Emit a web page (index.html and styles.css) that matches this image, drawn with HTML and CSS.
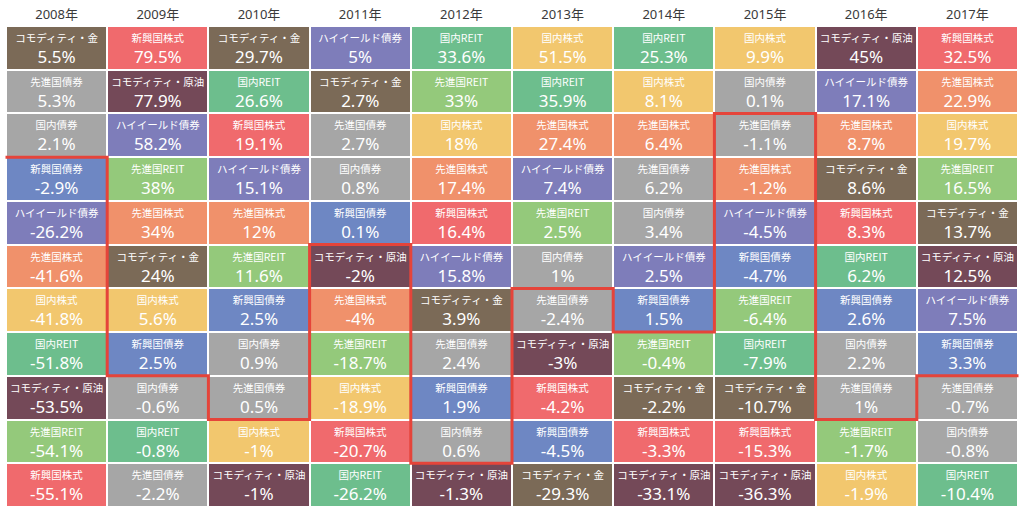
FILE: index.html
```html
<!DOCTYPE html>
<html lang="ja">
<head>
<meta charset="utf-8">
<title>資産クラス別リターン</title>
<link rel="stylesheet" href="styles.css">
</head>
<body>
<div class="page">
  <div class="table">
    <div class="col">
      <div class="year">2008年</div>
      <div class="cell gold"><span class="label">コモディティ・金</span><span class="value">5.5%</span></div>
      <div class="cell devbond"><span class="label">先進国債券</span><span class="value">5.3%</span></div>
      <div class="cell jbond"><span class="label">国内債券</span><span class="value">2.1%</span></div>
      <div class="cell embond"><span class="label">新興国債券</span><span class="value">-2.9%</span></div>
      <div class="cell hy"><span class="label">ハイイールド債券</span><span class="value">-26.2%</span></div>
      <div class="cell deveq"><span class="label">先進国株式</span><span class="value">-41.6%</span></div>
      <div class="cell jeq"><span class="label">国内株式</span><span class="value">-41.8%</span></div>
      <div class="cell jreit"><span class="label">国内REIT</span><span class="value">-51.8%</span></div>
      <div class="cell oil"><span class="label">コモディティ・原油</span><span class="value">-53.5%</span></div>
      <div class="cell devreit"><span class="label">先進国REIT</span><span class="value">-54.1%</span></div>
      <div class="cell emeq"><span class="label">新興国株式</span><span class="value">-55.1%</span></div>
    </div>
    <div class="col">
      <div class="year">2009年</div>
      <div class="cell emeq"><span class="label">新興国株式</span><span class="value">79.5%</span></div>
      <div class="cell oil"><span class="label">コモディティ・原油</span><span class="value">77.9%</span></div>
      <div class="cell hy"><span class="label">ハイイールド債券</span><span class="value">58.2%</span></div>
      <div class="cell devreit"><span class="label">先進国REIT</span><span class="value">38%</span></div>
      <div class="cell deveq"><span class="label">先進国株式</span><span class="value">34%</span></div>
      <div class="cell gold"><span class="label">コモディティ・金</span><span class="value">24%</span></div>
      <div class="cell jeq"><span class="label">国内株式</span><span class="value">5.6%</span></div>
      <div class="cell embond"><span class="label">新興国債券</span><span class="value">2.5%</span></div>
      <div class="cell jbond"><span class="label">国内債券</span><span class="value">-0.6%</span></div>
      <div class="cell jreit"><span class="label">国内REIT</span><span class="value">-0.8%</span></div>
      <div class="cell devbond"><span class="label">先進国債券</span><span class="value">-2.2%</span></div>
    </div>
    <div class="col">
      <div class="year">2010年</div>
      <div class="cell gold"><span class="label">コモディティ・金</span><span class="value">29.7%</span></div>
      <div class="cell jreit"><span class="label">国内REIT</span><span class="value">26.6%</span></div>
      <div class="cell emeq"><span class="label">新興国株式</span><span class="value">19.1%</span></div>
      <div class="cell hy"><span class="label">ハイイールド債券</span><span class="value">15.1%</span></div>
      <div class="cell deveq"><span class="label">先進国株式</span><span class="value">12%</span></div>
      <div class="cell devreit"><span class="label">先進国REIT</span><span class="value">11.6%</span></div>
      <div class="cell embond"><span class="label">新興国債券</span><span class="value">2.5%</span></div>
      <div class="cell jbond"><span class="label">国内債券</span><span class="value">0.9%</span></div>
      <div class="cell devbond"><span class="label">先進国債券</span><span class="value">0.5%</span></div>
      <div class="cell jeq"><span class="label">国内株式</span><span class="value">-1%</span></div>
      <div class="cell oil"><span class="label">コモディティ・原油</span><span class="value">-1%</span></div>
    </div>
    <div class="col">
      <div class="year">2011年</div>
      <div class="cell hy"><span class="label">ハイイールド債券</span><span class="value">5%</span></div>
      <div class="cell gold"><span class="label">コモディティ・金</span><span class="value">2.7%</span></div>
      <div class="cell devbond"><span class="label">先進国債券</span><span class="value">2.7%</span></div>
      <div class="cell jbond"><span class="label">国内債券</span><span class="value">0.8%</span></div>
      <div class="cell embond"><span class="label">新興国債券</span><span class="value">0.1%</span></div>
      <div class="cell oil"><span class="label">コモディティ・原油</span><span class="value">-2%</span></div>
      <div class="cell deveq"><span class="label">先進国株式</span><span class="value">-4%</span></div>
      <div class="cell devreit"><span class="label">先進国REIT</span><span class="value">-18.7%</span></div>
      <div class="cell jeq"><span class="label">国内株式</span><span class="value">-18.9%</span></div>
      <div class="cell emeq"><span class="label">新興国株式</span><span class="value">-20.7%</span></div>
      <div class="cell jreit"><span class="label">国内REIT</span><span class="value">-26.2%</span></div>
    </div>
    <div class="col">
      <div class="year">2012年</div>
      <div class="cell jreit"><span class="label">国内REIT</span><span class="value">33.6%</span></div>
      <div class="cell devreit"><span class="label">先進国REIT</span><span class="value">33%</span></div>
      <div class="cell jeq"><span class="label">国内株式</span><span class="value">18%</span></div>
      <div class="cell deveq"><span class="label">先進国株式</span><span class="value">17.4%</span></div>
      <div class="cell emeq"><span class="label">新興国株式</span><span class="value">16.4%</span></div>
      <div class="cell hy"><span class="label">ハイイールド債券</span><span class="value">15.8%</span></div>
      <div class="cell gold"><span class="label">コモディティ・金</span><span class="value">3.9%</span></div>
      <div class="cell devbond"><span class="label">先進国債券</span><span class="value">2.4%</span></div>
      <div class="cell embond"><span class="label">新興国債券</span><span class="value">1.9%</span></div>
      <div class="cell jbond"><span class="label">国内債券</span><span class="value">0.6%</span></div>
      <div class="cell oil"><span class="label">コモディティ・原油</span><span class="value">-1.3%</span></div>
    </div>
    <div class="col">
      <div class="year">2013年</div>
      <div class="cell jeq"><span class="label">国内株式</span><span class="value">51.5%</span></div>
      <div class="cell jreit"><span class="label">国内REIT</span><span class="value">35.9%</span></div>
      <div class="cell deveq"><span class="label">先進国株式</span><span class="value">27.4%</span></div>
      <div class="cell hy"><span class="label">ハイイールド債券</span><span class="value">7.4%</span></div>
      <div class="cell devreit"><span class="label">先進国REIT</span><span class="value">2.5%</span></div>
      <div class="cell jbond"><span class="label">国内債券</span><span class="value">1%</span></div>
      <div class="cell devbond"><span class="label">先進国債券</span><span class="value">-2.4%</span></div>
      <div class="cell oil"><span class="label">コモディティ・原油</span><span class="value">-3%</span></div>
      <div class="cell emeq"><span class="label">新興国株式</span><span class="value">-4.2%</span></div>
      <div class="cell embond"><span class="label">新興国債券</span><span class="value">-4.5%</span></div>
      <div class="cell gold"><span class="label">コモディティ・金</span><span class="value">-29.3%</span></div>
    </div>
    <div class="col">
      <div class="year">2014年</div>
      <div class="cell jreit"><span class="label">国内REIT</span><span class="value">25.3%</span></div>
      <div class="cell jeq"><span class="label">国内株式</span><span class="value">8.1%</span></div>
      <div class="cell deveq"><span class="label">先進国株式</span><span class="value">6.4%</span></div>
      <div class="cell devbond"><span class="label">先進国債券</span><span class="value">6.2%</span></div>
      <div class="cell jbond"><span class="label">国内債券</span><span class="value">3.4%</span></div>
      <div class="cell hy"><span class="label">ハイイールド債券</span><span class="value">2.5%</span></div>
      <div class="cell embond"><span class="label">新興国債券</span><span class="value">1.5%</span></div>
      <div class="cell devreit"><span class="label">先進国REIT</span><span class="value">-0.4%</span></div>
      <div class="cell gold"><span class="label">コモディティ・金</span><span class="value">-2.2%</span></div>
      <div class="cell emeq"><span class="label">新興国株式</span><span class="value">-3.3%</span></div>
      <div class="cell oil"><span class="label">コモディティ・原油</span><span class="value">-33.1%</span></div>
    </div>
    <div class="col">
      <div class="year">2015年</div>
      <div class="cell jeq"><span class="label">国内株式</span><span class="value">9.9%</span></div>
      <div class="cell jbond"><span class="label">国内債券</span><span class="value">0.1%</span></div>
      <div class="cell devbond"><span class="label">先進国債券</span><span class="value">-1.1%</span></div>
      <div class="cell deveq"><span class="label">先進国株式</span><span class="value">-1.2%</span></div>
      <div class="cell hy"><span class="label">ハイイールド債券</span><span class="value">-4.5%</span></div>
      <div class="cell embond"><span class="label">新興国債券</span><span class="value">-4.7%</span></div>
      <div class="cell devreit"><span class="label">先進国REIT</span><span class="value">-6.4%</span></div>
      <div class="cell jreit"><span class="label">国内REIT</span><span class="value">-7.9%</span></div>
      <div class="cell gold"><span class="label">コモディティ・金</span><span class="value">-10.7%</span></div>
      <div class="cell emeq"><span class="label">新興国株式</span><span class="value">-15.3%</span></div>
      <div class="cell oil"><span class="label">コモディティ・原油</span><span class="value">-36.3%</span></div>
    </div>
    <div class="col">
      <div class="year">2016年</div>
      <div class="cell oil"><span class="label">コモディティ・原油</span><span class="value">45%</span></div>
      <div class="cell hy"><span class="label">ハイイールド債券</span><span class="value">17.1%</span></div>
      <div class="cell deveq"><span class="label">先進国株式</span><span class="value">8.7%</span></div>
      <div class="cell gold"><span class="label">コモディティ・金</span><span class="value">8.6%</span></div>
      <div class="cell emeq"><span class="label">新興国株式</span><span class="value">8.3%</span></div>
      <div class="cell jreit"><span class="label">国内REIT</span><span class="value">6.2%</span></div>
      <div class="cell embond"><span class="label">新興国債券</span><span class="value">2.6%</span></div>
      <div class="cell jbond"><span class="label">国内債券</span><span class="value">2.2%</span></div>
      <div class="cell devbond"><span class="label">先進国債券</span><span class="value">1%</span></div>
      <div class="cell devreit"><span class="label">先進国REIT</span><span class="value">-1.7%</span></div>
      <div class="cell jeq"><span class="label">国内株式</span><span class="value">-1.9%</span></div>
    </div>
    <div class="col">
      <div class="year">2017年</div>
      <div class="cell emeq"><span class="label">新興国株式</span><span class="value">32.5%</span></div>
      <div class="cell deveq"><span class="label">先進国株式</span><span class="value">22.9%</span></div>
      <div class="cell jeq"><span class="label">国内株式</span><span class="value">19.7%</span></div>
      <div class="cell devreit"><span class="label">先進国REIT</span><span class="value">16.5%</span></div>
      <div class="cell gold"><span class="label">コモディティ・金</span><span class="value">13.7%</span></div>
      <div class="cell oil"><span class="label">コモディティ・原油</span><span class="value">12.5%</span></div>
      <div class="cell hy"><span class="label">ハイイールド債券</span><span class="value">7.5%</span></div>
      <div class="cell embond"><span class="label">新興国債券</span><span class="value">3.3%</span></div>
      <div class="cell devbond"><span class="label">先進国債券</span><span class="value">-0.7%</span></div>
      <div class="cell jbond"><span class="label">国内債券</span><span class="value">-0.8%</span></div>
      <div class="cell jreit"><span class="label">国内REIT</span><span class="value">-10.4%</span></div>
    </div>
  </div>
  <svg class="zero-line" viewBox="0 0 1024 514" aria-hidden="true">
    <polyline points="7,157.2 107.2,157.2 107.2,375.8 208.4,375.8 208.4,419.6 309.6,419.6 309.6,244.6 410.8,244.6 410.8,463.3 512,463.3 512,288.4 613.2,288.4 613.2,332.1 714.4,332.1 714.4,113.5 815.6,113.5 815.6,419.6 916.8,419.6 916.8,375.8 1017,375.8"/>
  </svg>
</div>
</body>
</html>
```

FILE: styles.css
```css
html, body {
  margin: 0;
  padding: 0;
  background: #ffffff;
}

body {
  font-family: "Noto Sans", "Noto Sans CJK JP", sans-serif;
  width: 1024px;
  height: 514px;
  overflow: hidden;
}

.page {
  position: relative;
  width: 1024px;
  height: 514px;
}

.table {
  display: flex;
  gap: 2px;
  padding: 0 7px;
  height: 506px;
}

.col {
  flex: 1;
  min-width: 0;
  display: flex;
  flex-direction: column;
  gap: 2px;
}

.year {
  height: 25px;
  flex: none;
  display: flex;
  align-items: center;
  justify-content: center;
  padding-top: 2px;
  box-sizing: border-box;
  font-size: 13px;
  color: #3a3a3a;
}

.cell {
  flex: 1;
  display: flex;
  flex-direction: column;
  align-items: center;
  color: #ffffff;
  overflow: hidden;
}

.label {
  font-size: 10.5px;
  line-height: 12px;
  margin-top: 5px;
  white-space: nowrap;
  font-family: "Noto Sans CJK JP", "Noto Sans", sans-serif;
}

.value {
  font-size: 17px;
  line-height: 20px;
  margin-top: 3px;
  white-space: nowrap;
}

.gold    { background: #7b6a57; }
.emeq    { background: #f06a6d; }
.devbond { background: #a6a6a6; }
.jbond   { background: #a6a6a6; }
.oil     { background: #744958; }
.jreit   { background: #6dbe8d; }
.hy      { background: #7e7dba; }
.embond  { background: #6e87c3; }
.devreit { background: #94c97b; }
.deveq   { background: #f0916b; }
.jeq     { background: #f2c76e; }

.zero-line {
  position: absolute;
  top: 0;
  left: 0;
  width: 1024px;
  height: 514px;
  pointer-events: none;
}

.zero-line polyline {
  fill: none;
  stroke: #e5443a;
  stroke-width: 3;
  stroke-linejoin: miter;
  stroke-linecap: square;
}
```
